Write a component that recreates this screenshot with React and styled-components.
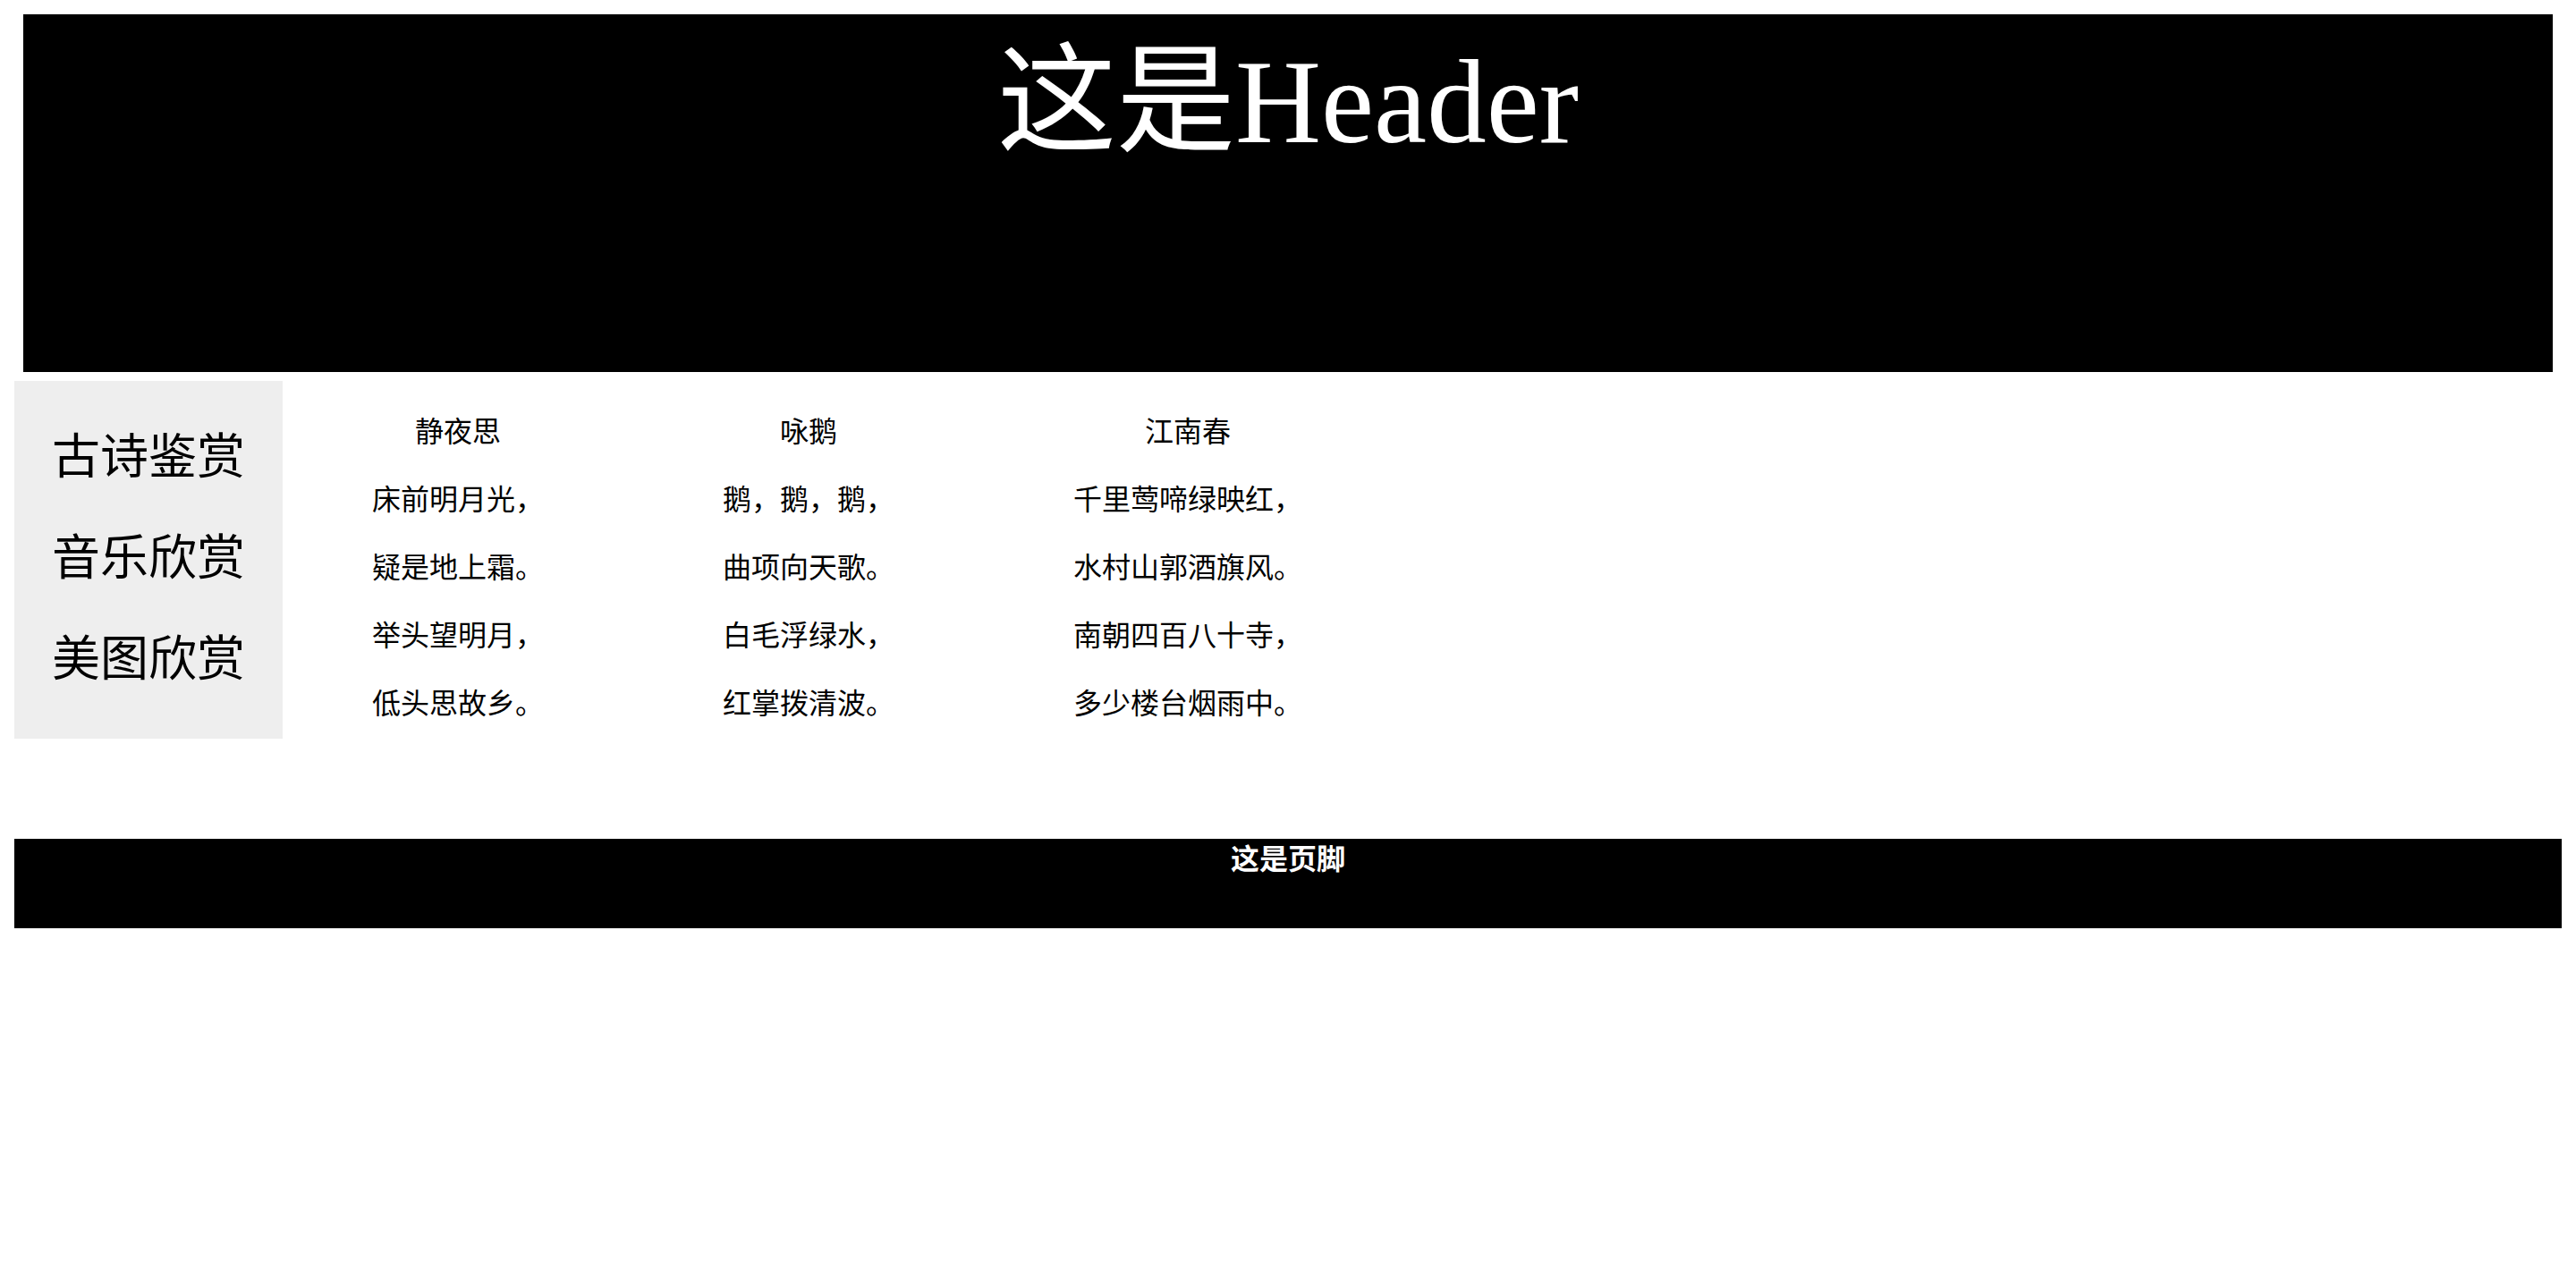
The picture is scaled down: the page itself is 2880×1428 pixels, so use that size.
import React from "react";
import styled, { createGlobalStyle } from "styled-components";

const GlobalStyle = createGlobalStyle`
  html, body {
    margin: 0;
    padding: 0;
    background: #ffffff;
  }
  body {
    font-family: "Liberation Serif", "Noto Sans CJK SC", serif;
    color: #000000;
  }
`;

const Page = styled.div`
  box-sizing: border-box;
  width: 100%;
  padding: 16px 16px 0;
`;

const Header = styled.header`
  box-sizing: border-box;
  height: 400px;
  margin: 0 10px 10px;
  padding-top: 19px;
  background: #000000;
`;

const Title = styled.h1`
  margin: 0;
  font-size: 133px;
  line-height: 1.2;
  font-weight: 400;
  color: #ffffff;
  text-align: center;
`;

const Main = styled.div`
  display: flex;
  align-items: flex-start;
`;

const Sidebar = styled.nav`
  box-sizing: border-box;
  flex: 0 0 300px;
  height: 400px;
  padding-top: 30px;
  background: #eeeeee;
`;

const NavList = styled.ul`
  list-style: none;
  margin: 0;
  padding: 0;
`;

const NavItem = styled.li`
  font-size: 54px;
  line-height: 113px;
  text-align: center;
`;

const Poems = styled.div`
  display: flex;
  gap: 200px;
  padding: 19px 0 0 100px;
`;

const Poem = styled.section`
  display: flex;
  flex-direction: column;
  text-align: center;
`;

const PoemLine = styled.p`
  margin: 0;
  font-size: 32px;
  line-height: 76px;
  white-space: nowrap;
`;

const Footer = styled.footer`
  height: 100px;
  margin-top: 112px;
  background: #000000;
  color: #ffffff;
  font-size: 32px;
  font-weight: 700;
  line-height: 46px;
  text-align: center;
`;

const navItems = ["古诗鉴赏", "音乐欣赏", "美图欣赏"];

const poems = [
  {
    title: "静夜思",
    lines: ["床前明月光，", "疑是地上霜。", "举头望明月，", "低头思故乡。"],
  },
  {
    title: "咏鹅",
    lines: ["鹅，鹅，鹅，", "曲项向天歌。", "白毛浮绿水，", "红掌拨清波。"],
  },
  {
    title: "江南春",
    lines: ["千里莺啼绿映红，", "水村山郭酒旗风。", "南朝四百八十寺，", "多少楼台烟雨中。"],
  },
];

export default function App() {
  return (
    <>
      <GlobalStyle />
      <Page>
        <Header>
          <Title>这是Header</Title>
        </Header>
        <Main>
          <Sidebar>
            <NavList>
              {navItems.map((item) => (
                <NavItem key={item}>{item}</NavItem>
              ))}
            </NavList>
          </Sidebar>
          <Poems>
            {poems.map((poem) => (
              <Poem key={poem.title}>
                <PoemLine>{poem.title}</PoemLine>
                {poem.lines.map((line) => (
                  <PoemLine key={line}>{line}</PoemLine>
                ))}
              </Poem>
            ))}
          </Poems>
        </Main>
        <Footer>这是页脚</Footer>
      </Page>
    </>
  );
}
